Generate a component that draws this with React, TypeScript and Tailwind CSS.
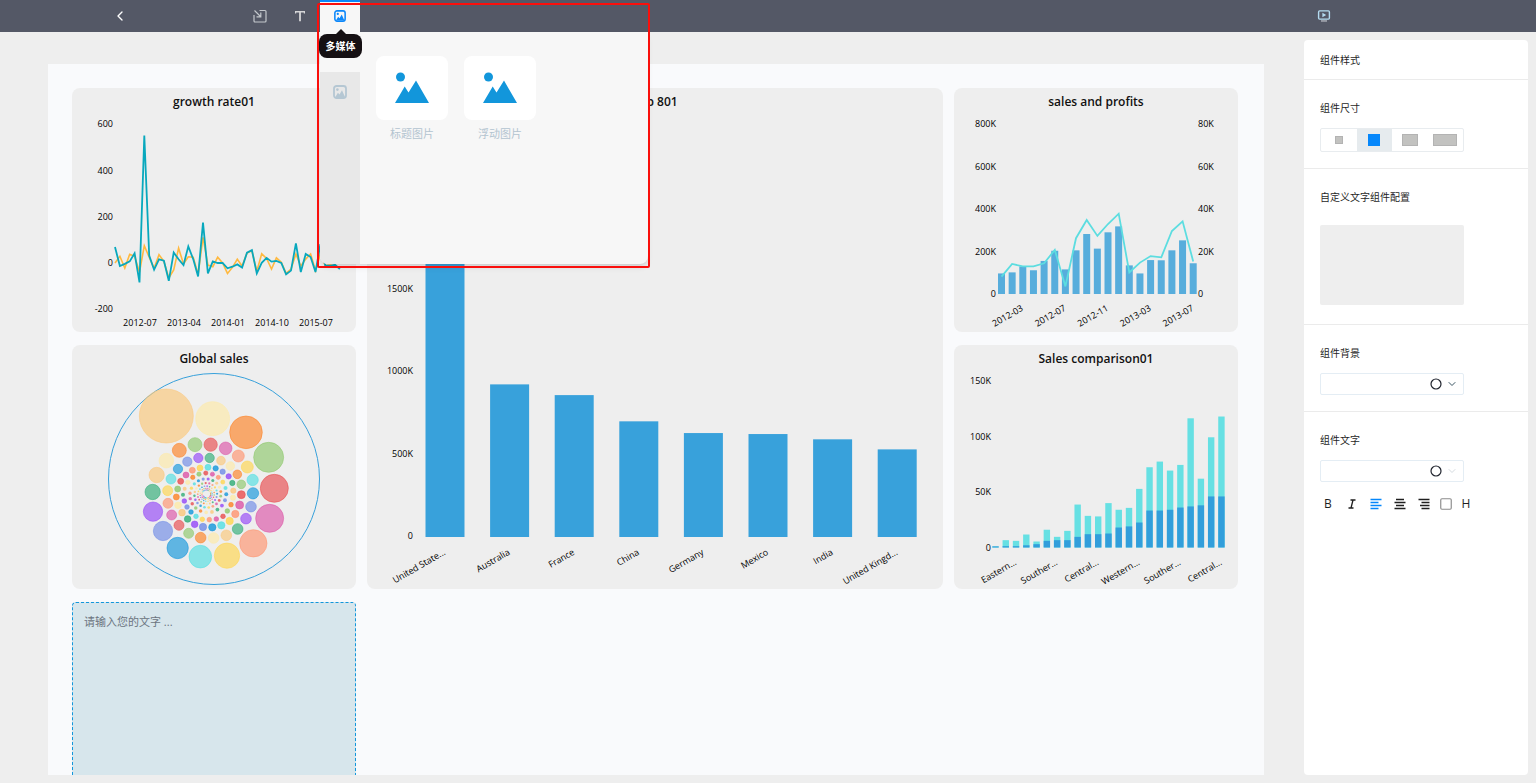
import { useState, type ReactNode } from 'react';
import { ChevronDown, ChevronLeft, Circle, Square } from 'lucide-react';

const GROWTH = [
  69, -13, -4, 7, 42, -84, 552, 32, -29, 16, 10, -77, 45, 16, -9, 72, 17, -58, 175, -45, 7, 0, 0, -23,
  -16, -6, -20, 45, 56, -45, 1, 22, 6, 9, 0, -49, -33, 85, -39, 39, 26, -39, 82, -10, -12, -8, -26,
];
const GROWTH_PREV = [
  0, 29, -22, 38, 29, -40, 75, 25, -23, 36, 7, -65, -30, 64, -4, 27, 25, -48, 111, -9, -16, 25, 0, -45,
  -19, 16, -13, 43, 53, -36, 40, 20, -26, 22, 3, -45, -26, 39, -13, 17, 39, -33, 40, -12, -8, -14, -20,
];

const COUNTRIES = [
  { name: 'United State...', value: 2297 },
  { name: 'Australia', value: 925 },
  { name: 'France', value: 860 },
  { name: 'China', value: 701 },
  { name: 'Germany', value: 630 },
  { name: 'Mexico', value: 624 },
  { name: 'India', value: 592 },
  { name: 'United Kingd...', value: 531 },
];

const SALES = [97, 102, 130, 112, 156, 204, 116, 206, 283, 214, 291, 319, 135, 97, 160, 159, 206, 253, 145];
const PROFITS = [8.2, 14.2, 13, 13, 14.5, 20.8, 3.6, 26.3, 34.9, 27.4, 33, 37.9, 10.2, 14.8, 17.9, 17.3, 29.7, 34.3, 15.4];
const SALES_MONTHS = ['2012-03', '2012-07', '2012-11', '2013-03', '2013-07'];

const COMPARE_TOTAL = [
  1, 6.6, 6, 11.7, 5.4, 16, 9.6, 15, 38.7, 28.5, 28, 40, 34, 35.7, 52.8, 72.3, 77.4, 69.3, 74.4, 116.4, 62, 99.3, 118,
];
const COMPARE_BASE = [
  1, 1.2, 1.2, 2, 3, 6, 6.6, 6.6, 9.6, 12, 12, 12.6, 18, 19, 22.5, 33.3, 33.3, 34, 36, 37, 38, 46, 46,
];
const REGIONS = ['Eastern...', 'Souther...', 'Central...', 'Western...', 'Souther...', 'Central...'];

const BUBBLE_COLORS = [
  '#fbc77a', '#fdeaa8', '#fd8225', '#8dc86c', '#e84c4e', '#dc55a7', '#ff936f',
  '#ffd64f', '#51dfe2', '#1296db', '#6f8be6', '#9446f8', '#2fac76',
];

// x, y, radius on a 690 x 648 field
const BUBBLES: number[][] = [
  [199, 153, 81], [338, 161, 51], [438, 202, 49], [506, 277, 45], [523, 370, 42], [509, 460, 42],
  [460, 535, 41], [381, 572, 38], [301, 575, 34], [233, 549, 32], [189, 498, 29], [159, 440, 29],
  [158, 381, 23], [170, 330, 23], [199, 287, 22], [238, 256, 21], [285, 239, 21], [332, 239, 20],
  [377, 250, 19], [415, 273, 18], [442, 306, 18], [458, 345, 17], [459, 385, 17], [453, 425, 16],
  [438, 461, 16], [413, 492, 16], [379, 511, 16], [341, 519, 16], [302, 518, 16], [266, 505, 15],
  [237, 481, 15], [215, 450, 15], [204, 415, 15], [203, 377, 15], [213, 342, 15], [234, 312, 14],
  [262, 290, 14], [295, 279, 14], [329, 279, 14], [363, 287, 13], [391, 303, 13], [412, 328, 13],
  [424, 358, 13], [424, 389, 12], [419, 420, 12], [406, 447, 11], [389, 468, 11], [364, 481, 11],
  [337, 487, 11], [309, 486, 11], [284, 478, 10], [263, 462, 10], [246, 443, 10], [234, 421, 10],
  [229, 396, 9], [233, 372, 9], [242, 349, 9], [258, 330, 9], [277, 316, 9], [300, 309, 9],
  [324, 307, 9], [347, 310, 8], [368, 320, 8], [386, 334, 8], [397, 354, 8], [400, 377, 8],
  [399, 398, 8], [393, 419, 7], [382, 438, 7], [369, 454, 7], [349, 462, 7], [328, 464, 7],
  [307, 463, 7], [288, 454, 7], [273, 441, 7], [261, 426, 7], [253, 408, 7], [249, 389, 6],
  [254, 371, 6],
];

// the spiral keeps winding inwards with ever smaller bubbles
let spiralRadius = 68;
let spiralAngle = 194;
for (let i = 0; i < 115; i++) {
  spiralRadius *= 0.984;
  spiralAngle += 18.4;
  const rad = (spiralAngle * Math.PI) / 180;
  BUBBLES.push([
    320 + spiralRadius * Math.cos(rad),
    388 + spiralRadius * Math.sin(rad),
    Math.max(2, spiralRadius * 0.1),
  ]);
}

const toPoints = (values: number[], x: (i: number) => number, y: (v: number) => number) =>
  values.map((v, i) => `${x(i).toFixed(1)},${y(v).toFixed(1)}`).join(' ');

function TiltedLabel({ x, y, children }: { x: number; y: number; children: ReactNode }) {
  return (
    <text textAnchor="end" transform={`translate(${x} ${y}) rotate(-30)`}>
      {children}
    </text>
  );
}

function ChartCard({ title, className = '', children }: { title: string; className?: string; children: ReactNode }) {
  return (
    <section className={`rounded-lg bg-[#eeeeee] ${className}`}>
      <h2 className="text-center text-xs leading-7 font-semibold text-[#111111]">{title}</h2>
      {children}
    </section>
  );
}

function GrowthChart() {
  const x = (i: number) => 43 + i * 4.89;
  const y = (v: number) => 147 - v * 0.231;
  return (
    <svg viewBox="0 0 284 216" className="block w-full fill-black text-[9px]">
      {[600, 400, 200, 0, -200].map((v) => (
        <text key={v} x={41} y={y(v) + 3} textAnchor="end">{v}</text>
      ))}
      <polyline points={toPoints(GROWTH_PREV, x, y)} fill="none" stroke="#ffb940" strokeWidth={1.6} />
      <polyline points={toPoints(GROWTH, x, y)} fill="none" stroke="#08a8bd" strokeWidth={1.8} />
      {['2012-07', '2013-04', '2014-01', '2014-10', '2015-07'].map((label, i) => (
        <text key={label} x={68 + i * 44} y={210} textAnchor="middle">{label}</text>
      ))}
    </svg>
  );
}

function CountryChart() {
  const y = (v: number) => 421 - v * 0.165;
  return (
    <svg viewBox="0 0 576 473" className="block w-full fill-black text-[9px]">
      {[2000, 1500, 1000, 500, 0].map((v) => (
        <text key={v} x={46} y={y(v) + 2} textAnchor="end">{v ? `${v}K` : 0}</text>
      ))}
      {COUNTRIES.map((c, i) => (
        <g key={c.name}>
          <rect x={58.5 + i * 64.6} y={y(c.value)} width={39} height={421 - y(c.value)} fill="#38a1db" />
          <TiltedLabel x={79 + i * 64.6} y={438}>{c.name}</TiltedLabel>
        </g>
      ))}
    </svg>
  );
}

function SalesChart() {
  const x = (i: number) => 47.5 + i * 10.65;
  const y = (v: number) => 178 - v * 0.212;
  return (
    <svg viewBox="0 0 284 216" className="block w-full fill-black text-[9px]">
      {[800, 600, 400, 200, 0].map((v) => (
        <g key={v}>
          <text x={42} y={y(v) + 3} textAnchor="end">{v ? `${v}K` : 0}</text>
          <text x={244} y={y(v) + 3}>{v ? `${v / 10}K` : 0}</text>
        </g>
      ))}
      {SALES.map((v, i) => (
        <rect key={i} x={x(i) - 3.5} y={y(v)} width={7} height={178 - y(v)} fill="#57addc" />
      ))}
      <polyline points={toPoints(PROFITS, x, (v) => y(v * 10))} fill="none" stroke="#5cdde0" strokeWidth={1.8} />
      {SALES_MONTHS.map((label, i) => (
        <TiltedLabel key={label} x={x(2 + i * 4) + 1} y={194}>{label}</TiltedLabel>
      ))}
    </svg>
  );
}

function CompareChart() {
  const x = (i: number) => 41.5 + i * 10.27;
  const y = (v: number) => 174.5 - v * 1.11;
  return (
    <svg viewBox="0 0 284 216" className="block w-full fill-black text-[9px]">
      {[150, 100, 50, 0].map((v) => (
        <text key={v} x={37} y={y(v) + 3} textAnchor="end">{v ? `${v}K` : 0}</text>
      ))}
      {COMPARE_TOTAL.map((total, i) => (
        <g key={i}>
          <rect x={x(i) - 3.2} y={y(total)} width={6.4} height={174.5 - y(total)} fill="#66e0e3" />
          <rect x={x(i) - 3.2} y={y(COMPARE_BASE[i])} width={6.4} height={174.5 - y(COMPARE_BASE[i])} fill="#329edb" />
        </g>
      ))}
      {REGIONS.map((label, i) => (
        <TiltedLabel key={i} x={x(2 + i * 4) + 1} y={191}>{label}</TiltedLabel>
      ))}
    </svg>
  );
}

function BubbleChart() {
  return (
    <svg viewBox="0 0 284 216" className="block w-full">
      <circle cx={142} cy={106} r={105.5} fill="none" stroke="#38a1db" />
      <g transform="translate(28 -8) scale(0.3333)">
        {BUBBLES.map(([cx, cy, r], i) => {
          const color = BUBBLE_COLORS[i % BUBBLE_COLORS.length];
          return (
            <circle
              key={i}
              cx={cx}
              cy={cy}
              r={r}
              fill={color}
              fillOpacity={r > 12 ? 0.65 : 0.8}
              stroke={color}
              strokeOpacity={0.8}
              strokeWidth={r > 6 ? 2 : 0}
            />
          );
        })}
      </g>
    </svg>
  );
}

function ImageIcon({ className }: { className: string }) {
  return (
    <svg viewBox="0 0 14 14" className={className} aria-hidden="true">
      <rect x="1" y="1" width="12" height="12" rx="2.5" fill="none" stroke="currentColor" strokeWidth="1.8" />
      <circle cx="4.4" cy="4.6" r="1.3" fill="currentColor" />
      <path d="M2.4 12 4.9 7.8l1.6 1.7L9 5.2l3 6.8Z" fill="currentColor" />
    </svg>
  );
}

function InsertIcon() {
  return (
    <svg viewBox="0 0 14 14" className="size-3.5" fill="none" stroke="currentColor" strokeWidth="1.2" aria-hidden="true">
      <path d="M6.5 1.5H12a1 1 0 0 1 1 1V12a1 1 0 0 1-1 1H2a1 1 0 0 1-1-1V6" />
      <path d="M1.5 1.5 7.5 7.5M7.8 3.5v4.3H3.5" />
    </svg>
  );
}

function TextIcon() {
  return (
    <svg viewBox="0 0 12 12" className="size-3" aria-hidden="true">
      <path d="M1 1h10v2.6H9.8V2.6H6.9v8.6H5.1V2.6H2.2v1H1Z" fill="currentColor" />
    </svg>
  );
}

function PreviewIcon() {
  return (
    <svg viewBox="0 0 14 14" className="size-3.5" aria-hidden="true">
      <rect x="1.6" y="1.9" width="10.8" height="8.2" rx="1" fill="none" stroke="currentColor" strokeWidth="1.4" />
      <path d="M5.4 3.8 9.2 6 5.4 8.2Z" fill="currentColor" />
      <path d="M4 11.2h6v1.5H4Z" fill="#a9adb5" />
    </svg>
  );
}

function ItalicIcon() {
  return (
    <svg viewBox="0 0 12 12" className="size-3" fill="none" stroke="currentColor" strokeWidth="1.3" aria-hidden="true">
      <path d="M4.5 2h5M2.5 10h5M7 2 5 10" />
    </svg>
  );
}

function PictureTile({ label }: { label: string }) {
  return (
    <button type="button" className="flex w-18 flex-col items-center gap-1.5 text-[11px] leading-4 text-[#b3c4d0]">
      <span className="flex h-16 w-full items-center justify-center rounded-lg bg-white">
        <svg viewBox="0 0 34 32" className="h-8 w-[34px] fill-[#1296db]" aria-hidden="true">
          <circle cx="5.5" cy="5" r="4.5" />
          <path d="M0 31 9.7 14.5l3.8 6L21 8.5 34 31Z" />
        </svg>
      </span>
      {label}
    </button>
  );
}

function MediaMenu() {
  return (
    <div className="absolute top-8 left-0 z-20 h-[232px] w-[328px] rounded-b-lg bg-[#f7f7f7] shadow-md">
      <div className="flex h-full">
        <div className="flex w-10 flex-col pt-10">
          <button type="button" aria-label="图片" className="flex flex-1 justify-center rounded-bl-lg bg-[#e8e8e8] pt-[13px] text-[#b5c7d3]">
            <ImageIcon className="size-3.5" />
          </button>
        </div>
        <div className="flex items-start gap-4 px-4 pt-6">
          <PictureTile label="标题图片" />
          <PictureTile label="浮动图片" />
        </div>
      </div>
      <div role="tooltip" className="absolute top-0.5 -left-px w-[43px] rounded-lg bg-[#151013] text-center text-[10px] leading-6 font-bold text-white">
        <span className="absolute -top-[5px] left-1/2 -translate-x-1/2 border-x-[6px] border-b-[6px] border-x-transparent border-b-[#151013]" />
        多媒体
      </div>
    </div>
  );
}

function Toolbar() {
  return (
    <header className="flex h-8 shrink-0 bg-[#545866] pl-[100px] text-[#c3c7cc]">
      <button type="button" aria-label="返回" className="flex w-10 items-center justify-center text-white">
        <ChevronLeft className="size-4" />
      </button>
      <nav className="ml-[100px] flex">
        <button type="button" aria-label="插入" className="flex w-10 items-center justify-center">
          <InsertIcon />
        </button>
        <button type="button" aria-label="文字" className="flex w-10 items-center justify-center text-[#d5d6d8]">
          <TextIcon />
        </button>
        <div className="relative w-10">
          <button type="button" aria-label="多媒体" className="flex h-full w-full items-center justify-center border-t-2 border-[#0b87fa] bg-[#f7f7f7] pb-0.5 text-[#0b87fa]">
            <ImageIcon className="size-3" />
          </button>
          <MediaMenu />
          <div className="pointer-events-none absolute top-[3px] -left-[3px] z-30 h-[265px] w-[333px] rounded-xs border-2 border-[#fa0f0c]" />
        </div>
      </nav>
      <button type="button" aria-label="预览" className="mr-[192px] ml-auto flex w-10 items-center justify-center text-[#b4dbf0]">
        <PreviewIcon />
      </button>
    </header>
  );
}

const SIZES = [
  { id: 'small', label: '小', shape: 'size-2' },
  { id: 'medium', label: '中', shape: 'size-3' },
  { id: 'wide', label: '宽', shape: 'h-3 w-4' },
  { id: 'full', label: '全宽', shape: 'h-3 w-6' },
];

function ColorSelect({ id, muted = false }: { id: string; muted?: boolean }) {
  return (
    <div className="relative mt-3 w-36">
      <select id={id} className="block h-[22px] w-full appearance-none rounded-xs border border-[#e4edf4] bg-white">
        <option value="" />
      </select>
      <Circle className="pointer-events-none absolute top-[5px] right-[22px] size-3 text-[#20242e]" strokeWidth={2.4} />
      <ChevronDown
        className={`pointer-events-none absolute top-[5px] right-[6px] size-3 ${muted ? 'text-[#d5dbe0]' : 'text-[#3b5563]'}`}
      />
    </div>
  );
}

function AlignIcon({ rows }: { rows: string }) {
  return (
    <svg viewBox="0 0 12 12" className="size-3" fill="none" stroke="currentColor" strokeWidth="1.3" aria-hidden="true">
      <path d={rows} />
    </svg>
  );
}

function StylePanel() {
  const [size, setSize] = useState('medium');

  return (
    <aside className="mt-2 mr-2 mb-2 ml-10 w-56 shrink-0 rounded-sm bg-white text-[10px] leading-4 text-[#1f1f1f]">
      <h2 className="border-b border-[#ebebeb] px-4 pt-3 pb-[11px]">组件样式</h2>

      <section className="border-b border-[#ebebeb] px-4 pt-5 pb-4">
        <h3>组件尺寸</h3>
        <div className="mt-3 flex h-6 w-36 rounded-xs border border-[#e8ecef]">
          {SIZES.map((s) => (
            <button
              key={s.id}
              type="button"
              aria-label={s.label}
              aria-pressed={size === s.id}
              onClick={() => setSize(s.id)}
              className={`flex flex-1 items-center justify-center ${size === s.id ? 'bg-[#e6ebee]' : ''}`}
            >
              <span className={`${s.shape} ${size === s.id ? 'bg-[#0587fb]' : 'border border-[#b3b3b3] bg-[#c2c2c0]'}`} />
            </button>
          ))}
        </div>
      </section>

      <section className="border-b border-[#ebebeb] px-4 pt-5 pb-[19px]">
        <h3>自定义文字组件配置</h3>
        <div className="mt-5 h-20 w-36 rounded-xs bg-[#eeeeee]" />
      </section>

      <section className="border-b border-[#ebebeb] px-4 pt-5 pb-4">
        <label htmlFor="background" className="block">组件背景</label>
        <ColorSelect id="background" />
      </section>

      <section className="px-4 pt-5">
        <label htmlFor="text-color" className="block">组件文字</label>
        <ColorSelect id="text-color" muted />
        <div className="mt-3.5 -ml-1 flex h-4 text-xs font-medium">
          <button type="button" aria-label="加粗" className="flex w-6 items-center justify-center">B</button>
          <button type="button" aria-label="斜体" className="flex w-6 items-center justify-center">
            <ItalicIcon />
          </button>
          <button type="button" aria-label="左对齐" className="flex w-6 items-center justify-center text-[#0587fb]">
            <AlignIcon rows="M.5 1.5h11M.5 4.5h8M.5 7.5h11M.5 10.5h8" />
          </button>
          <button type="button" aria-label="居中" className="flex w-6 items-center justify-center">
            <AlignIcon rows="M2 1.5h8M.5 4.5h11M2 7.5h8M.5 10.5h11" />
          </button>
          <button type="button" aria-label="右对齐" className="flex w-6 items-center justify-center">
            <AlignIcon rows="M.5 1.5h11M3.5 4.5h8M2 7.5h9.5M3.5 10.5h8" />
          </button>
          <button type="button" aria-label="边框" className="flex w-5 items-center justify-center text-[#8c8c8c]">
            <Square className="size-3.5" />
          </button>
          <button type="button" aria-label="标题" className="flex w-5 items-center justify-center">H</button>
        </div>
      </section>
    </aside>
  );
}

export default function App() {
  return (
    <div className="flex h-screen flex-col overflow-hidden bg-[#eeeeee] font-['Open_Sans','Noto_Sans_CJK_SC',sans-serif]">
      <Toolbar />
      <div className="flex min-h-0 flex-1">
        <main className="mt-8 mb-2 ml-12 min-w-0 flex-1 overflow-hidden bg-[#f9fafc] pt-6 pr-[26px] pl-6">
          <div className="grid grid-cols-[284fr_576fr_284fr] gap-x-[11px] gap-y-[13px]">
            <ChartCard title="growth rate01">
              <GrowthChart />
            </ChartCard>
            <ChartCard title="Top 801" className="row-span-2">
              <CountryChart />
            </ChartCard>
            <ChartCard title="sales and profits">
              <SalesChart />
            </ChartCard>
            <ChartCard title="Global sales">
              <BubbleChart />
            </ChartCard>
            <ChartCard title="Sales comparison01">
              <CompareChart />
            </ChartCard>
            <textarea
              aria-label="文字"
              placeholder="请输入您的文字 ..."
              className="h-61 w-full resize-none rounded-sm border border-dashed border-[#1296db] bg-[#d7e6ec] px-[11px] py-[11px] text-[11px] leading-4 placeholder:text-[#6b7480]"
            />
          </div>
        </main>
        <StylePanel />
      </div>
    </div>
  );
}
